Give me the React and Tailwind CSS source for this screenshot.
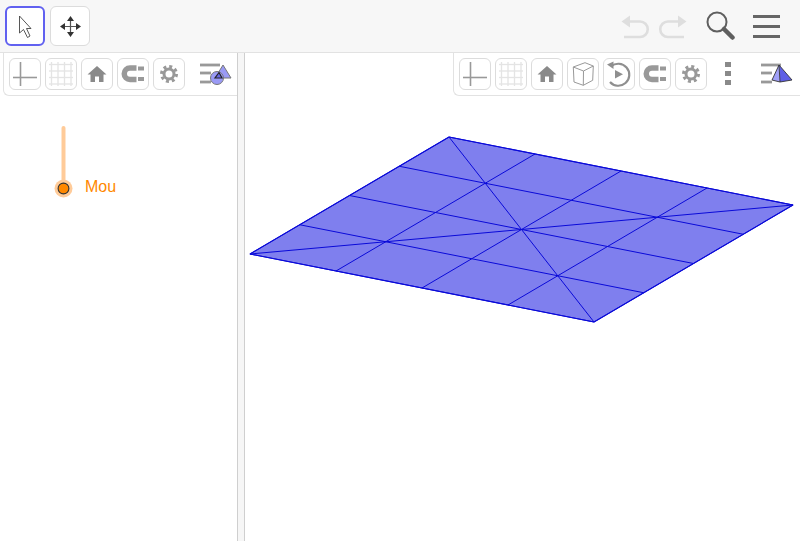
const L = [250, 254];
const T = [449, 137];
const B = [594, 322];
const R = [793, 205];

// 4x4 mesh, points are L + i*(T-L)/4 + j*(B-L)/4
const pt = (i, j) => [
  L[0] + (i * (T[0] - L[0])) / 4 + (j * (B[0] - L[0])) / 4,
  L[1] + (i * (T[1] - L[1])) / 4 + (j * (B[1] - L[1])) / 4,
];
const STEPS = [0, 1, 2, 3, 4];

function Mesh() {
  return (
    <svg width="555" height="488" viewBox="245 53 555 488" className="block">
      <polygon points={[L, T, R, B].map((p) => p.join(",")).join(" ")} fill="#7f7fee" stroke="#0a0ad8" strokeWidth="1.1" strokeLinejoin="round" />
      <g stroke="#0a0ad8" strokeWidth="1">
        {STEPS.map((n) => (
          <g key={n}>
            <line x1={pt(n, 0)[0]} y1={pt(n, 0)[1]} x2={pt(n, 4)[0]} y2={pt(n, 4)[1]} />
            <line x1={pt(0, n)[0]} y1={pt(0, n)[1]} x2={pt(4, n)[0]} y2={pt(4, n)[1]} />
          </g>
        ))}
        <line x1={L[0]} y1={L[1]} x2={R[0]} y2={R[1]} />
        <line x1={T[0]} y1={T[1]} x2={B[0]} y2={B[1]} />
      </g>
    </svg>
  );
}

function IconButton({ children }) {
  return (
    <div className="w-8 h-8 shrink-0 rounded-md border border-[#dcdcdc] bg-white">
      <svg width="30" height="30" viewBox="1 1 30 30" className="block">
        {children}
      </svg>
    </div>
  );
}

const AxesIcon = () => (
  <g stroke="#999" strokeWidth="1.6">
    <line x1="11.5" y1="4" x2="11.5" y2="28" />
    <line x1="4" y1="19.5" x2="28" y2="19.5" />
  </g>
);

const GridIcon = () => (
  <g stroke="#e4e4e4" strokeWidth="1.3">
    {[6.5, 13, 19.5, 26].map((n) => (
      <g key={n}>
        <line x1={n} y1="4" x2={n} y2="28" />
        <line x1="4" y1={n} x2="28" y2={n} />
      </g>
    ))}
  </g>
);

const HomeIcon = () => (
  <path d="M16 8 L25.5 16.5 L22.5 16.5 L22.5 24 L18 24 L18 18.5 L14 18.5 L14 24 L9.5 24 L9.5 16.5 L6.5 16.5 Z" fill="#8a8a8a" />
);

const MagnetIcon = () => (
  <g fill="none">
    <path d="M19.5 10 L13 10 A5.75 5.75 0 0 0 13 21.5 L19.5 21.5" stroke="#999" strokeWidth="5.5" />
    <path d="M21 10.5 L27 10.5 M21 21 L27 21" stroke="#999" strokeWidth="4" />
  </g>
);

const GearIcon = () => (
  <g fill="none" stroke="#999">
    <circle cx="16" cy="16" r="5" strokeWidth="3" />
    <circle cx="16" cy="16" r="7.5" strokeWidth="3" strokeDasharray="3 2.89" />
  </g>
);

const CubeIcon = () => (
  <g fill="none" stroke="#999" strokeWidth="1" strokeLinejoin="round">
    <path d="M6.3 9 L18 4.7 L26.3 8 L25.7 22.3 L16.3 27.3 L7 24 Z" />
    <path d="M6.3 9 L16.5 13 L26.3 8 M16.5 13 L16.3 27.3" />
  </g>
);

const ReplayIcon = () => (
  <g>
    <path d="M8 8.5 A11 11 0 1 1 7 24" fill="none" stroke="#8f8f8f" strokeWidth="2.2" />
    <path d="M4 6.5 L10.5 3.5 L10.5 11 Z" fill="#8f8f8f" />
    <path d="M12 12 L20 16.3 L12 20.5 Z" fill="#8f8f8f" />
  </g>
);

function StyleLines() {
  return (
    <g stroke="#999" strokeWidth="2.8">
      <line x1="0" y1="3" x2="20" y2="3" />
      <line x1="0" y1="11" x2="11" y2="11" />
      <line x1="0" y1="20" x2="11" y2="20" />
    </g>
  );
}

function StyleIcon2D() {
  return (
    <svg width="34" height="28" viewBox="0 0 34 28" className="block">
      <StyleLines />
      <polygon points="23,3 31,16 15,16" fill="#9a9af5" stroke="#777" strokeWidth="1" />
      <circle cx="17" cy="16" r="6.5" fill="#9a9af5" stroke="#777" strokeWidth="1" />
      <path d="M15 16 L22 16 L19 10.5 Z" fill="#6a6ae6" stroke="#222" strokeWidth="1.2" />
    </svg>
  );
}

function StyleIcon3D() {
  return (
    <svg width="34" height="28" viewBox="0 0 34 28" className="block">
      <StyleLines />
      <path d="M18 3 L31 18 L19 20 Z" fill="#5f5fe6" />
      <path d="M18 3 L11 18 L19 20 Z" fill="#a0a0f8" />
      <path d="M18 3 L31 18 L19 20 L11 18 Z M18 3 L19 20" fill="none" stroke="#333" strokeWidth="0.9" strokeLinejoin="round" />
    </svg>
  );
}

function TopBar() {
  return (
    <div className="h-[53px] shrink-0 flex items-center gap-[5px] pl-[5px] pr-5 bg-[#f7f7f7] border-b border-[#e2e2e2]">
      <div className="w-10 h-10 flex items-center justify-center rounded-md border-2 border-[#6161f0] bg-white">
        <svg width="24" height="32" viewBox="0 0 24 32">
          <path d="M6.5 6 L6.5 23 L10.5 19.5 L14.5 27.5 L17 26 L13.5 18.5 L18 18.5 Z" fill="#fff" stroke="#444" strokeWidth="0.9" strokeLinejoin="round" />
        </svg>
      </div>
      <div className="w-10 h-10 flex items-center justify-center rounded-md border border-[#dcdcdc] bg-white">
        <svg width="24" height="24" viewBox="0 0 24 24">
          <path d="M12.5 4 V21 M4 12.5 H21" stroke="#555" strokeWidth="1.2" />
          <path d="M12.5 2 L16 7 H9 Z M12.5 23 L16 18 H9 Z M2 12.5 L7 9 V16 Z M23 12.5 L18 9 V16 Z" fill="#333" />
        </svg>
      </div>
      <div className="ml-auto flex items-center">
        <svg width="30" height="26" viewBox="0 0 30 26" className="block">
          <path d="M6 8.5 H19 A7.75 7.75 0 0 1 19 24 H3" fill="none" stroke="#dedede" strokeWidth="2.6" />
          <path d="M0.5 8.5 L9 2.5 V14.5 Z" fill="#dedede" />
        </svg>
        <svg width="30" height="26" viewBox="0 0 30 26" className="block ml-[6px]">
          <path d="M24 8.5 H11 A7.75 7.75 0 0 0 11 24 H27" fill="none" stroke="#dedede" strokeWidth="2.6" />
          <path d="M29.5 8.5 L21 2.5 V14.5 Z" fill="#dedede" />
        </svg>
        <svg width="30" height="30" viewBox="0 0 30 30" className="block ml-[18px]">
          <circle cx="12" cy="11" r="9.5" fill="none" stroke="#5f5f5f" strokeWidth="2" />
          <line x1="19" y1="18" x2="27.5" y2="26.5" stroke="#5f5f5f" strokeWidth="4.5" strokeLinecap="round" />
        </svg>
        <div className="ml-[18px] w-[27px] flex flex-col gap-[7px]">
          <div className="h-[3px] bg-[#666]" />
          <div className="h-[3px] bg-[#666]" />
          <div className="h-[3px] bg-[#666]" />
        </div>
      </div>
    </div>
  );
}

function LeftPanel() {
  return (
    <div className="relative w-[237px] shrink-0 bg-white">
      <div className="absolute top-0 left-[3px] right-0 h-[43px] flex items-start gap-1 pt-[5px] pl-[5px] bg-white border-l border-b border-[#e2e2e2] rounded-bl-md">
        <IconButton><AxesIcon /></IconButton>
        <IconButton><GridIcon /></IconButton>
        <IconButton><HomeIcon /></IconButton>
        <IconButton><MagnetIcon /></IconButton>
        <IconButton><GearIcon /></IconButton>
        <div className="ml-[11px] mt-[4px]"><StyleIcon2D /></div>
      </div>
      <svg width="80" height="150" viewBox="0 53 80 150" className="absolute top-0 left-0">
        <line x1="63.5" y1="128" x2="63.5" y2="188" stroke="#ffcb99" strokeWidth="4" strokeLinecap="round" />
        <circle cx="63.5" cy="188.5" r="9" fill="#ffcb99" />
        <circle cx="63.5" cy="188.5" r="5.4" fill="#ff8800" stroke="#333" strokeWidth="1.1" />
      </svg>
      <span className="absolute top-[124px] left-[85px] text-base leading-5 text-[#ff8800] font-['Liberation_Sans',sans-serif]">Mou</span>
    </div>
  );
}

function RightPanel() {
  return (
    <div className="relative flex-1 bg-white">
      <Mesh />
      <div className="absolute top-0 right-0 w-[347px] h-[43px] flex items-start gap-1 pt-[5px] pl-[5px] bg-white border-l border-b border-[#e2e2e2] rounded-bl-md">
        <IconButton><AxesIcon /></IconButton>
        <IconButton><GridIcon /></IconButton>
        <IconButton><HomeIcon /></IconButton>
        <IconButton><CubeIcon /></IconButton>
        <IconButton><ReplayIcon /></IconButton>
        <IconButton><MagnetIcon /></IconButton>
        <IconButton><GearIcon /></IconButton>
        <div className="ml-[14px] mt-[4px] flex flex-col gap-1">
          <div className="w-[6px] h-[5px] bg-[#8a8a8a]" />
          <div className="w-[6px] h-[5px] bg-[#8a8a8a]" />
          <div className="w-[6px] h-[5px] bg-[#8a8a8a]" />
        </div>
        <div className="ml-[26px] mt-[4px]"><StyleIcon3D /></div>
      </div>
    </div>
  );
}

export default function App() {
  return (
    <div className="w-[800px] h-[543px] overflow-hidden bg-white flex flex-col font-['Liberation_Sans',sans-serif]">
      <TopBar />
      <div className="h-[488px] flex">
        <LeftPanel />
        <div className="w-2 shrink-0 bg-[#f6f6f6] border-x border-[#cfcfcf]" />
        <RightPanel />
      </div>
    </div>
  );
}
